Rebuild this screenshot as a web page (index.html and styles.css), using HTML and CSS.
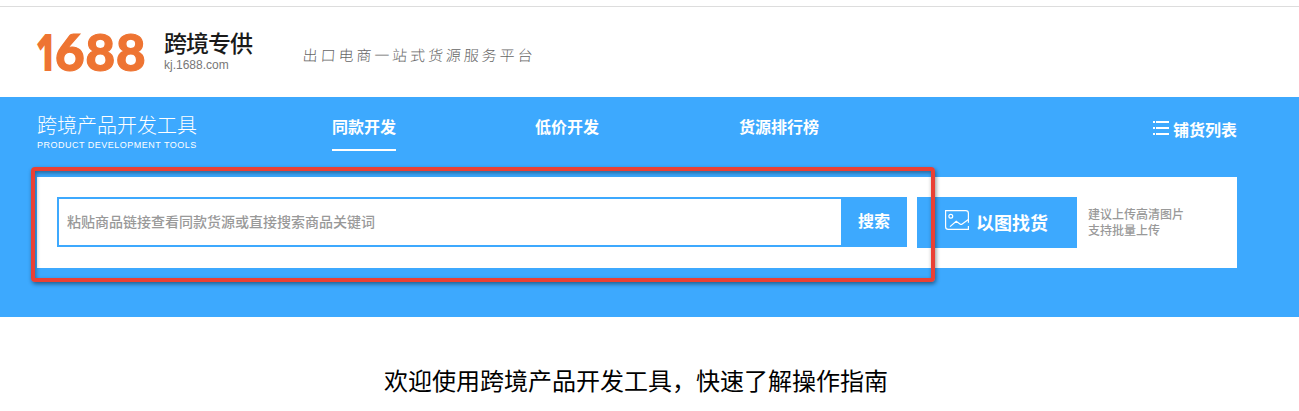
FILE: index.html
```html
<!DOCTYPE html>
<html lang="zh-CN">
<head>
<meta charset="utf-8">
<title>跨境专供</title>
<link rel="stylesheet" href="styles.css">
</head>
<body>
<header class="site-header">
  <div class="logo"><span class="logo-one">1</span><span class="logo-rest">688</span></div>
  <div class="site-name">
    <div class="site-title">跨境专供</div>
    <div class="site-url">kj.1688.com</div>
  </div>
  <div class="slogan">出口电商一站式货源服务平台</div>
</header>
<section class="banner">
  <div class="banner-head">
    <div class="product">
      <div class="product-name">跨境产品开发工具</div>
      <div class="product-sub">PRODUCT DEVELOPMENT TOOLS</div>
    </div>
    <nav class="tabs">
      <a class="tab active">同款开发</a>
      <a class="tab">低价开发</a>
      <a class="tab">货源排行榜</a>
    </nav>
    <a class="list-link">
      <svg class="list-icon" width="16" height="14" viewBox="0 0 16 14" fill="#fff"><path d="M0 0h2v2H0zM3 0h13v2H3zM0 6h2v2H0zM3 6h13v2H3zM0 12h2v2H0zM3 12h13v2H3z"/></svg>
      <span class="list-text">铺货列表</span>
    </a>
  </div>
  <div class="panel">
    <div class="search-input">粘贴商品链接查看同款货源或直接搜索商品关键词</div>
    <div class="search-button">搜索</div>
    <div class="image-button">
      <svg class="image-icon" width="24" height="20" viewBox="0 0 24 20" fill="none" stroke="#fff" stroke-width="1.2"><path d="M23.4 12.8V3.2Q23.4.6 20.8.6H.6V16.8Q.6 19.4 3.2 19.4H23.4V16"/><circle cx="5.8" cy="6.2" r="1.9"/><path d="M5 16.6L11.2 11.2L15.3 14.2Q16.2 14.8 17.2 14L23.4 9.5"/></svg>
      <span>以图找货</span>
    </div>
    <div class="hint">建议上传高清图片<br>支持批量上传</div>
    <div class="highlight"></div>
  </div>
</section>
<h1 class="welcome">欢迎使用跨境产品开发工具，快速了解操作指南</h1>
</body>
</html>
```
FILE: styles.css
```css
* { box-sizing: border-box; }
body {
  margin: 0;
  padding-top: 6px;
  height: 411px;
  overflow: hidden;
  background: #fff;
  color: #000;
  font-family: "Liberation Sans", "Noto Sans CJK SC", sans-serif;
}
.site-header {
  display: flex;
  height: 91px;
  border-top: 1px solid #ddd;
  padding-left: 35px;
  white-space: nowrap;
}
.logo {
  display: flex;
  width: 129px;
  padding-top: 18px;
  color: #ee7432;
}
.logo-one {
  width: 20px;
  padding-left: 1px;
  font: 800 52px/52px "Open Sans", sans-serif;
  transform: scaleX(0.65);
  transform-origin: 0 0;
}
.logo-rest {
  padding-top: 1px;
  font: 900 51px/52px Lato, sans-serif;
  letter-spacing: 0.9px;
  -webkit-text-stroke: 1.2px #ee7432;
}
.site-name { width: 139px; padding-top: 20px; }
.site-title {
  height: 31px;
  font-size: 23px;
  font-weight: 500;
  line-height: 35px;
  letter-spacing: -1px;
  color: #1a1a1a;
}
.site-url { font-size: 12px; line-height: 14px; color: #777; }
.slogan {
  padding-top: 37px;
  font-family: "Noto Sans CJK SC", sans-serif;
  font-size: 15px;
  font-weight: 300;
  line-height: 22px;
  letter-spacing: 2.9px;
  color: #666;
  transform: skewX(-4deg);
}
.banner {
  height: 220px;
  padding: 0 62px 0 37px;
  background: #3da9fe;
  color: #fff;
}
.banner-head { display: flex; height: 80px; white-space: nowrap; }
.product { width: 295px; padding-top: 14px; }
.product-name {
  height: 28px;
  font-size: 20px;
  font-weight: 300;
  line-height: 30px;
}
.product-sub { font-size: 9px; line-height: 13px; letter-spacing: 0.5px; }
.tabs { display: flex; gap: 140px; flex: 1; padding-top: 16px; }
.tab {
  height: 38px;
  margin-left: -1px;
  margin-right: 1px;
  font-size: 16px;
  font-weight: 700;
  line-height: 30px;
}
.active { margin: 0; border-bottom: 2px solid #fff; }
.list-link { display: flex; gap: 4px; padding-top: 18px; }
.list-icon { margin-top: 6px; }
.list-text { font-size: 16px; font-weight: 700; line-height: 31px; }
.panel {
  position: relative;
  display: flex;
  width: 1200px;
  height: 91px;
  padding: 20px 0 0 20px;
  background: #fff;
}
.search-input {
  width: 784px;
  height: 50px;
  padding-left: 8px;
  border: 2px solid #3da9fe;
  border-right: 0;
  font-size: 14px;
  font-weight: 500;
  line-height: 47px;
  color: #999;
}
.search-button {
  width: 66px;
  height: 50px;
  background: #3da9fe;
  font-size: 16px;
  font-weight: 700;
  line-height: 50px;
  text-align: center;
}
.image-button {
  display: flex;
  gap: 7px;
  width: 160px;
  height: 51px;
  margin-left: 10px;
  padding-left: 28px;
  background: #3da9fe;
  font-size: 18px;
  font-weight: 700;
  line-height: 54px;
}
.image-icon { margin-top: 13px; }
.hint {
  padding: 10px 0 0 11px;
  font-size: 12px;
  font-weight: 500;
  line-height: 16px;
  color: #999;
}
.highlight {
  position: absolute;
  left: -6px;
  top: -10px;
  width: 904px;
  height: 115px;
  border: 4px solid #ea4034;
  border-radius: 4px;
  box-shadow: 1px 2px 4px rgba(0, 0, 0, 0.45), inset 1px 2px 4px rgba(0, 0, 0, 0.4);
}
.welcome {
  margin: 45px 0 0 384px;
  font-size: 24px;
  font-weight: 400;
  line-height: 40px;
  white-space: nowrap;
}
```
